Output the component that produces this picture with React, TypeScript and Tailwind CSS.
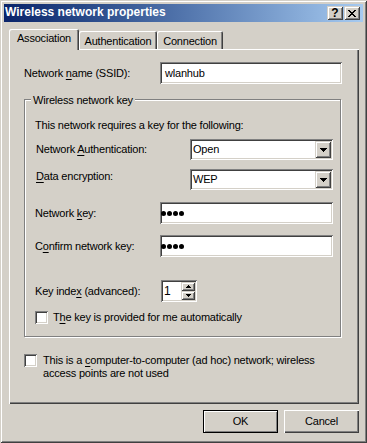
import React from 'react';

// classic 3D borders (Windows 2000 look)
const sunken =
  'shadow-[inset_1px_1px_#808080,inset_-1px_-1px_#ffffff,inset_2px_2px_#404040,inset_-2px_-2px_#d4d0c8]';
const raisedSmall =
  'shadow-[inset_1px_1px_#d4d0c8,inset_-1px_-1px_#404040,inset_2px_2px_#ffffff,inset_-2px_-2px_#808080]';

function Arrow({ dir }: { dir: 'down' | 'up' }) {
  if (dir === 'down') {
    return (
      <svg width="7" height="4" shapeRendering="crispEdges">
        <path d="M0 0h7v1h-1v1h-1v1h-1v1h-1v-1h-1v-1h-1v-1h-1z" fill="#000" />
      </svg>
    );
  }
  return (
    <svg width="5" height="3" shapeRendering="crispEdges">
      <path d="M2 0h1v1h1v1h1v1h-5v-1h1v-1h1z" fill="#000" />
    </svg>
  );
}

function SmallDown() {
  return (
    <svg width="5" height="3" shapeRendering="crispEdges">
      <path d="M0 0h5v1h-1v1h-1v1h-1v-1h-1v-1h-1z" fill="#000" />
    </svg>
  );
}

function CloseGlyph() {
  const rows = [
    [0, 6],
    [1, 5],
    [2, 4],
    [3, 3],
    [2, 4],
    [1, 5],
    [0, 6],
  ];
  return (
    <svg width="8" height="7" shapeRendering="crispEdges">
      {rows.map(([a, b], i) => (
        <g key={i}>
          <rect x={a} y={i} width={2} height={1} fill="#000" />
          <rect x={b} y={i} width={2} height={1} fill="#000" />
        </g>
      ))}
    </svg>
  );
}

function TitleButton({ children, className = '' }: { children: React.ReactNode; className?: string }) {
  return (
    <div
      className={`w-[16px] h-[14px] bg-[#d4d0c8] ${raisedSmall} flex items-center justify-center ${className}`}
    >
      {children}
    </div>
  );
}

function TextBox({ width, children }: { width: string; children: React.ReactNode }) {
  return (
    <div className={`${width} h-[22px] bg-white ${sunken} flex items-center`}>{children}</div>
  );
}

function Combo({ value }: { value: string }) {
  return (
    <div className={`w-[143px] h-[21px] bg-white ${sunken} flex p-[2px]`}>
      <div className="flex-1 flex items-center pl-[1px]">{value}</div>
      <div className={`w-[16px] bg-[#d4d0c8] ${raisedSmall} flex items-center justify-center`}>
        <Arrow dir="down" />
      </div>
    </div>
  );
}

function Dots() {
  return (
    <div className="flex gap-[1px] pl-[1px]">
      {[0, 1, 2, 3].map((i) => (
        <div key={i} className="w-[5px] h-[5px] rounded-full bg-black" />
      ))}
    </div>
  );
}

function CheckBox() {
  return <div className={`w-[13px] h-[13px] shrink-0 bg-white ${sunken}`} />;
}

export default function App() {
  return (
    <div className="w-[367px] h-[443px] bg-[#d4d0c8] p-[4px] shadow-[inset_1px_1px_#d4d0c8,inset_-1px_-1px_#404040,inset_2px_2px_#ffffff,inset_-2px_-2px_#808080] font-['Liberation_Sans',Arial,sans-serif] text-[11px] leading-[13px] tracking-[-0.2px] text-black">
      {/* Title bar */}
      <div className="h-[18px] flex items-center bg-linear-to-r from-[#0a246a] to-[#a6caf0] pl-[1px] pr-[3px]">
        <span className="flex-1 text-white font-bold text-[12px] leading-[14px] tracking-normal pb-[2px]">
          Wireless network properties
        </span>
        <TitleButton>
          <span className="font-bold text-[12px] leading-[12px] tracking-normal">?</span>
        </TitleButton>
        <TitleButton className="ml-[1px]">
          <CloseGlyph />
        </TitleButton>
      </div>

      {/* Tabs */}
      <div className="mt-[7px] h-[21px] flex items-end pl-[5px]">
        <div className="relative z-10 w-[70px] h-[21px] bg-[#d4d0c8] rounded-t-[2px] shadow-[inset_1px_1px_#ffffff,inset_-1px_0_#404040,inset_-2px_0_#808080] flex justify-center pt-[3px]">
          Association
        </div>
        <div className="w-[78px] h-[18px] mb-[1px] rounded-t-[2px] shadow-[inset_1px_1px_#ffffff,inset_-1px_0_#404040,inset_-2px_0_#808080] flex justify-center pt-[4px]">
          Authentication
        </div>
        <div className="w-[66px] h-[18px] mb-[1px] rounded-t-[2px] shadow-[inset_1px_1px_#ffffff,inset_-1px_0_#404040,inset_-2px_0_#808080] flex justify-center pt-[4px]">
          Connection
        </div>
      </div>

      {/* Tab panel */}
      <div className="-mt-[1px] ml-[5px] w-[350px] h-[355px] shadow-[inset_1px_1px_#ffffff,inset_-1px_-1px_#404040,inset_-2px_-2px_#808080] px-[15px] pt-[13px]">
        <div className="h-[22px] flex items-center">
          <div className="w-[136px]">
            Network <u className="underline-offset-[2px]">n</u>ame (SSID):
          </div>
          <TextBox width="w-[182px]">
            <span className="pl-[5px]">wlanhub</span>
          </TextBox>
        </div>

        {/* Group box */}
        <div className="relative mt-[15px] w-[317px] h-[238px] border border-[#808080] shadow-[1px_1px_#ffffff,inset_1px_1px_#ffffff] pl-[10px]">
          <span className="absolute left-[6px] -top-[6px] px-[2px] bg-[#d4d0c8]">Wireless network key</span>

          <p className="mt-[19px]">This network requires a key for the following:</p>

          <div className="mt-[7px] h-[21px] flex items-center">
            <div className="w-[155px] pl-[1px]">
              Network <u className="underline-offset-[2px]">A</u>uthentication:
            </div>
            <Combo value="Open" />
          </div>

          <div className="mt-[9px] h-[21px] flex">
            <div className="w-[155px] pl-[1px] pt-[1px]">
              <u className="underline-offset-[2px]">D</u>ata encryption:
            </div>
            <Combo value="WEP" />
          </div>

          <div className="mt-[12px] h-[22px] flex items-center">
            <div className="w-[125px]">
              Network <u className="underline-offset-[2px]">k</u>ey:
            </div>
            <TextBox width="w-[173px]">
              <Dots />
            </TextBox>
          </div>

          <div className="mt-[11px] h-[22px] flex items-center">
            <div className="w-[125px]">
              C<u className="underline-offset-[2px]">o</u>nfirm network key:
            </div>
            <TextBox width="w-[173px]">
              <Dots />
            </TextBox>
          </div>

          <div className="mt-[23px] h-[22px] flex items-center">
            <div className="w-[126px]">
              Key inde<u className="underline-offset-[2px]">x</u> (advanced):
            </div>
            <div className={`w-[36px] h-[22px] bg-white ${sunken} flex p-[2px]`}>
              <div className="flex-1 flex items-center pl-[1px] text-[12px]">1</div>
              <div className="w-[14px] flex flex-col">
                <div className={`h-[9px] bg-[#d4d0c8] ${raisedSmall} flex items-center justify-center`}>
                  <Arrow dir="up" />
                </div>
                <div className={`h-[9px] bg-[#d4d0c8] ${raisedSmall} flex items-center justify-center`}>
                  <SmallDown />
                </div>
              </div>
            </div>
          </div>

          <div className="mt-[9px] h-[13px] flex items-center">
            <CheckBox />
            <span className="ml-[5px]">
              T<u className="underline-offset-[2px]">h</u>e key is provided for me automatically
            </span>
          </div>
        </div>

        <div className="mt-[17px] flex items-start">
          <CheckBox />
          <span className="ml-[6px] whitespace-nowrap">
            This is a <u className="underline-offset-[2px]">c</u>omputer-to-computer (ad hoc) network; wireless
            <br />
            access points are not used
          </span>
        </div>
      </div>

      {/* Dialog buttons */}
      <div className="mt-[6px] flex justify-end gap-[6px] pr-[4px]">
        <button className="w-[75px] h-[23px] border border-black shadow-[inset_1px_1px_#ffffff,inset_-1px_-1px_#808080] flex items-center justify-center">
          OK
        </button>
        <button className="w-[75px] h-[23px] shadow-[inset_1px_1px_#ffffff,inset_-1px_-1px_#404040,inset_-2px_-2px_#808080] flex items-center justify-center">
          Cancel
        </button>
      </div>
    </div>
  );
}
